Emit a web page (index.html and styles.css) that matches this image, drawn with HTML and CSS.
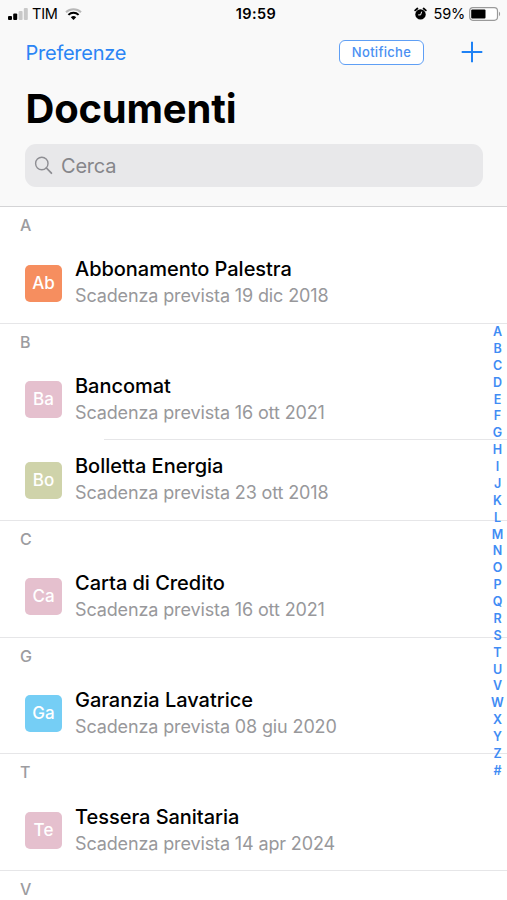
FILE: index.html
```html
<!DOCTYPE html>
<html lang="it">
<head>
    <meta charset="UTF-8">
    <meta name="viewport" content="width=device-width, initial-scale=1.0">
    <title>Documenti</title>
    <link rel="stylesheet" href="styles.css">
</head>
<body>
    <div class="header">
        <div class="status-bar">
            <div class="status-left">
                <svg class="signal" width="20" height="12" viewBox="0 0 20 12">
                    <rect x="0" y="8" width="4" height="4" rx="1" fill="#000"/>
                    <rect x="5.2" y="5.5" width="4" height="6.5" rx="1" fill="#000"/>
                    <rect x="10.6" y="3" width="4" height="9" rx="1" fill="#c8c8c8"/>
                    <rect x="15.8" y="0" width="4" height="12" rx="1" fill="#c8c8c8"/>
                </svg>
                <span class="carrier">TIM</span>
                <svg class="wifi" width="17" height="12" viewBox="0 0 17 12" fill="none" stroke-width="2">
                    <path d="M1 4.3a10.8 10.8 0 0 1 15 0" stroke="#b8b8b8"/>
                    <path d="M3.4 6.9a7.3 7.3 0 0 1 10.2 0" stroke="#000"/>
                    <path d="M5.8 9.2a4 4 0 0 1 5.4 0L8.5 12z" fill="#000"/>
                </svg>
            </div>
            <div class="time">19:59</div>
            <div class="status-right">
                <svg class="alarm" width="13" height="14" viewBox="0 0 13 14">
                    <circle cx="6.5" cy="7.4" r="5.2" fill="#000"/>
                    <path d="M1.2 3.4L3.4 1.5M11.8 3.4L9.6 1.5" stroke="#000" stroke-width="1.8" stroke-linecap="round"/>
                    <path d="M7.7 4.6L6.6 7.9H4.2" fill="none" stroke="#f8f8f8" stroke-width="1"/>
                </svg>
                <span class="percent">59%</span>
                <svg class="battery" width="32" height="14" viewBox="0 0 32 14">
                    <rect x=".7" y=".7" width="27.8" height="12.6" rx="3.2" fill="#fff" stroke="#9a9a9a" stroke-width="1.2"/>
                    <rect x="2.2" y="2.4" width="14.3" height="9.2" rx="1" fill="#000"/>
                    <path d="M30 4.8c1.5.6 1.5 3.8 0 4.4z" fill="#9a9a9a"/>
                </svg>
            </div>
        </div>

        <div class="nav-bar">
            <a class="nav-link">Preferenze</a>
            <div class="nav-actions">
                <button class="notify-btn">Notifiche</button>
                <svg class="add-icon" width="22" height="22" viewBox="0 0 22 22" stroke="#1f82f5" stroke-width="2">
                    <path d="M11 .7v20.6M.7 11h20.6"/>
                </svg>
            </div>
        </div>

        <h1 class="title">Documenti</h1>

        <div class="search">
            <svg width="19" height="19" viewBox="0 0 19 19" fill="none" stroke="#8e8e93" stroke-width="1.4" stroke-linecap="round">
                <circle cx="7.8" cy="7.5" r="6.2"/>
                <path d="M12.4 12l5 5.2" stroke-width="1.8"/>
            </svg>
            <span>Cerca</span>
        </div>
    </div>

    <div class="list">
        <div class="section">
            <div class="section-title">A</div>
            <div class="item">
                <div class="badge orange">Ab</div>
                <div class="details">
                    <div class="name">Abbonamento Palestra</div>
                    <div class="expiry">Scadenza prevista 19 dic 2018</div>
                </div>
            </div>
        </div>

        <div class="section">
            <div class="section-title">B</div>
            <div class="item">
                <div class="badge pink">Ba</div>
                <div class="details">
                    <div class="name">Bancomat</div>
                    <div class="expiry">Scadenza prevista 16 ott 2021</div>
                </div>
            </div>
            <div class="item">
                <div class="badge green">Bo</div>
                <div class="details">
                    <div class="name">Bolletta Energia</div>
                    <div class="expiry">Scadenza prevista 23 ott 2018</div>
                </div>
            </div>
        </div>

        <div class="section">
            <div class="section-title">C</div>
            <div class="item">
                <div class="badge pink">Ca</div>
                <div class="details">
                    <div class="name">Carta di Credito</div>
                    <div class="expiry">Scadenza prevista 16 ott 2021</div>
                </div>
            </div>
        </div>

        <div class="section">
            <div class="section-title">G</div>
            <div class="item">
                <div class="badge blue">Ga</div>
                <div class="details">
                    <div class="name">Garanzia Lavatrice</div>
                    <div class="expiry">Scadenza prevista 08 giu 2020</div>
                </div>
            </div>
        </div>

        <div class="section">
            <div class="section-title">T</div>
            <div class="item">
                <div class="badge pink">Te</div>
                <div class="details">
                    <div class="name">Tessera Sanitaria</div>
                    <div class="expiry">Scadenza prevista 14 apr 2024</div>
                </div>
            </div>
        </div>

        <div class="section">
            <div class="section-title">V</div>
        </div>
    </div>

    <!-- Alphabet index floating over the list -->
    <div class="index">
        <span>A</span><span>B</span><span>C</span><span>D</span><span>E</span><span>F</span><span>G</span>
        <span>H</span><span>I</span><span>J</span><span>K</span><span>L</span><span>M</span><span>N</span>
        <span>O</span><span>P</span><span>Q</span><span>R</span><span>S</span><span>T</span><span>U</span>
        <span>V</span><span>W</span><span>X</span><span>Y</span><span>Z</span><span>#</span>
    </div>
</body>
</html>
```

FILE: styles.css
```css
* {
    margin: 0;
    padding: 0;
    box-sizing: border-box;
}
:root {
    --tint: #2b85f5;
    --bar-bg: #f9f9f9;
    --line: #e6e6e8;
    --grey: #98989b;
}
body {
    font-family: Inter, "Liberation Sans", sans-serif;
    background: #fff;
    color: #000;
    height: 900px;
    overflow: hidden;
    position: relative;
}
.header {
    height: 207px;
    background: var(--bar-bg);
    border-bottom: 1px solid #d4d4d6;
}
.status-bar {
    display: grid;
    grid-template-columns: 1fr auto 1fr;
    align-items: center;
    height: 27px;
    padding: 0 6px 0 8px;
    font-size: 14.5px;
}
.status-left,
.status-right {
    display: flex;
    align-items: center;
}
.status-right {
    justify-content: flex-end;
}
.carrier {
    margin-left: 4px;
    letter-spacing: -0.2px;
}
.wifi {
    margin-left: 7px;
}
.time {
    padding-left: 3px;
    font-weight: 600;
    letter-spacing: 0.4px;
}
.percent {
    margin: 0 4px 0 7px;
    letter-spacing: -0.2px;
}
.nav-bar {
    display: flex;
    justify-content: space-between;
    align-items: center;
    height: 50px;
    padding: 0 24px 0 25.5px;
    color: var(--tint);
}
.nav-link {
    padding-top: 1px;
    font-size: 20px;
    letter-spacing: -0.25px;
}
.nav-actions {
    display: flex;
    align-items: center;
    gap: 37px;
}
.notify-btn {
    width: 85px;
    height: 25px;
    border: 1.5px solid #5f9ff5;
    border-radius: 6px;
    background: #fff;
    color: #4a8ff2;
    font-family: inherit;
    font-size: 13px;
    font-weight: 500;
    letter-spacing: 0.3px;
}
.title {
    height: 67px;
    padding-left: 25.5px;
    font-size: 40px;
    font-weight: 700;
    letter-spacing: -0.2px;
    line-height: 64px;
}
.search {
    display: flex;
    align-items: center;
    gap: 8px;
    height: 43px;
    margin: 0 24px 0 25px;
    padding-left: 9px;
    border-radius: 11px;
    background: #e8e8ea;
    color: #86868a;
    font-size: 20px;
    letter-spacing: -0.2px;
}
.section {
    border-bottom: 1px solid var(--line);
}
.section-title {
    height: 35.5px;
    padding-left: 20px;
    color: #9c9ca0;
    font-size: 16px;
    font-weight: 500;
    line-height: 36.5px;
}
.item {
    display: flex;
    align-items: center;
    height: 80.3px;
    padding: 0.8px 0 0 25px;
    position: relative;
}
/* inset line between two rows of the same section */
.item + .item::before {
    content: "";
    position: absolute;
    top: -0.5px;
    left: 104px;
    right: 0;
    height: 1px;
    background: var(--line);
}
.badge {
    width: 37px;
    height: 37px;
    margin-right: 13px;
    border-radius: 5px;
    color: #fff;
    font-size: 17px;
    font-weight: 500;
    line-height: 37px;
    text-align: center;
}
.orange { background: #f68e5f; }
.pink { background: #e5c0ce; }
.green { background: #cfd3aa; }
.blue { background: #75cef5; }
.name {
    font-size: 20px;
    font-weight: 500;
    line-height: 27px;
    letter-spacing: -0.03px;
}
.expiry {
    color: var(--grey);
    font-size: 18px;
    line-height: 26.5px;
    letter-spacing: -0.13px;
}
.index {
    position: absolute;
    top: 323px;
    right: 2px;
    width: 15px;
    display: flex;
    flex-direction: column;
    align-items: center;
    color: #3f8cf4;
    font-size: 12.5px;
    font-weight: 600;
}
.index span {
    height: 16.88px;
    line-height: 17px;
}
```
